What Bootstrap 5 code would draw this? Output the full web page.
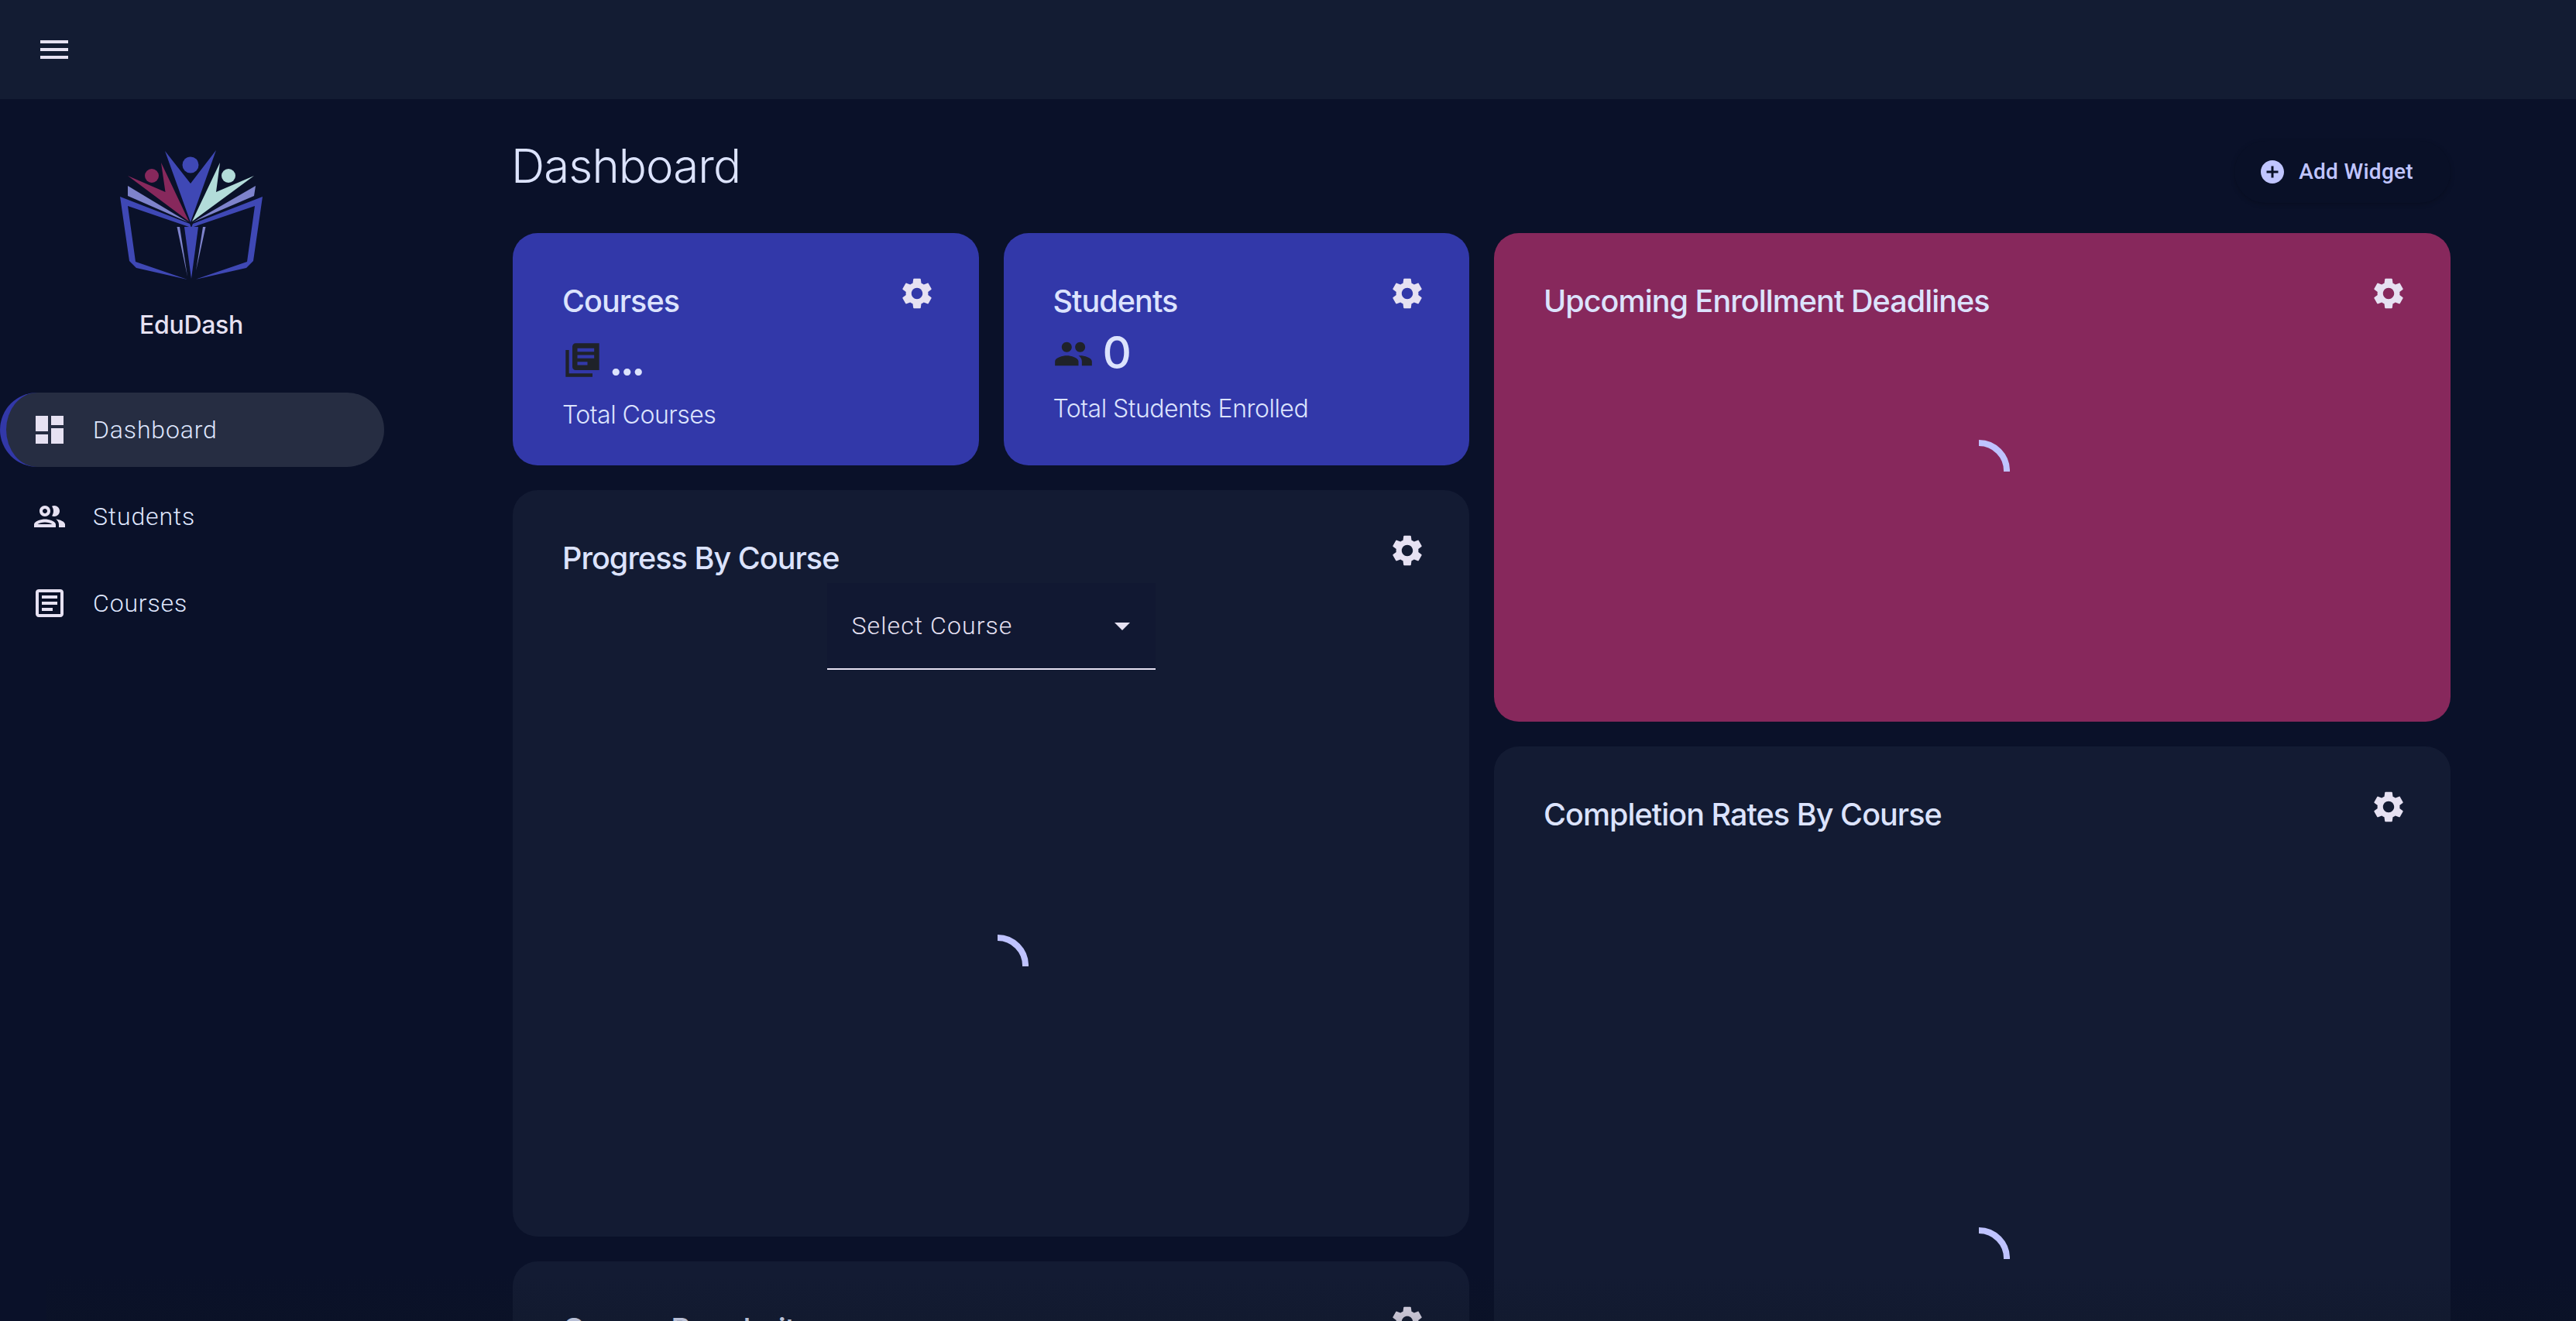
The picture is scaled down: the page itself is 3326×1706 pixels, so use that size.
<!doctype html>
<html lang="en"><head><meta charset="utf-8"><title>EduDash</title>
<link href="https://cdn.jsdelivr.net/npm/bootstrap@5.3.0/dist/css/bootstrap.min.css" rel="stylesheet">
<style>
html,body{height:1706px;overflow:hidden}
body{background:#0a1129;color:#dce3fd;font-family:Inter,"Liberation Sans",sans-serif}
body::after{content:"";position:absolute;left:60px;right:0;top:1646px;height:60px;background:linear-gradient(to bottom,rgba(14,22,30,0),rgba(14,22,30,.18));pointer-events:none}
.ed-top{height:128px;background:#131c33;padding:0 0 0 46px;align-items:center;justify-content:flex-start}
.ed-top svg{width:48px;height:48px;fill:#e6e1f2;display:block}
.ed-side{width:500px;flex:none;padding-top:66px}
.ed-logo{display:block;margin:0 auto 0 155px;width:184px;height:167px}
.ed-brand{font:500 32px/48px Inter,sans-serif;letter-spacing:-.3px;color:#e6e1f2;text-align:center;width:494px;margin-top:35px}
.ed-nav{margin-top:63px;width:496px;gap:16px}
.ed-link{height:96px;border-radius:48px;padding:0 0 0 40px;gap:32px;font:300 32px/48px Roboto,sans-serif;letter-spacing:.85px;color:#dfe6fd;align-items:center;border-left:8px solid transparent}
.ed-link:hover{color:#dfe6fd}
.ed-link svg{width:48px;height:48px;fill:#e6e1f2;flex:none}
.ed-link.active{background:#262d42;border-left-color:#3238a8;padding-left:32px;color:#dfe6fd}
.ed-link:not(.active){border-left:0}
.ed-main{width:2502px;flex:none;margin-left:162px}
.ed-head{height:173px}
.ed-h1{font:350 60px/72px Inter,sans-serif;letter-spacing:-.9px;color:#dce3fd;margin:50px 0 0 -2px}
.ed-add{height:80px;margin-top:54px;border-radius:40px;background:#091027;border:0;box-shadow:0 2px 6px rgba(0,0,0,.2);color:#c0c5ff;font:500 28px/1 Roboto,sans-serif;letter-spacing:.3px;padding:0 48px 0 31px;gap:16px;display:flex;align-items:center}
.ed-add:hover,.ed-add:active{background:#091027!important;color:#c0c5ff!important}
.ed-add svg{width:36px;height:36px;fill:#c0c5ff}
.ed-col{width:1235px;flex:none;gap:32px}
.ed-stat-row{gap:32px}
.ed-card{border:0;border-radius:32px;background:#131b33;color:#dce3fd;padding:56px 56px 0 64px;flex:none;overflow:hidden}
.ed-blue{background:#3238a9;height:300px;flex:1 1 0}
.ed-pink{background:#87285c;height:631px}
.ed-tall{height:964px}
.ed-comp{height:1100px}
.ed-pop{height:600px}
.ed-ttl{font:500 39.5px/64px Inter,sans-serif;letter-spacing:-.95px;color:#dce3fd;margin:0}
.ed-gear{width:48px;height:48px;fill:#e6e1f2;margin-top:-2px;flex:none}
.ed-stat{gap:12px;align-items:flex-start;font:500 58px/58px Inter,sans-serif;color:#dce3fd}
.ed-ico{width:52px;height:52px;fill:#1f2229;flex:none}
.ed-r1{height:91px;gap:8px}.ed-r1 .ed-ico{margin-top:18px}.ed-r1 span{margin-top:13px;font-weight:600;letter-spacing:-4px}
.ed-r2{height:83px}.ed-r2 .ed-ico{margin-top:10px}.ed-r2 span{margin-top:5px}
.ed-sub{font:300 32px/48px Inter,sans-serif;letter-spacing:-.5px;color:#dce3fd;margin:0}
.ed-select{width:424px;height:112px;background:#111832;border-bottom:2px solid #e6e1f2;padding:0 32px;margin-left:calc(50% - 216px);font:300 32px/48px Roboto,sans-serif;letter-spacing:1.1px;color:#e6e1f2;align-items:center;justify-content:space-between}
.ed-select svg{width:48px;height:48px;fill:#e6e1f2;margin-right:-13px}
.ed-spin{display:block;width:80px;height:80px;margin-left:calc(50% - 50px);transform:translateX(14px)}
.ed-spin path{fill:none;stroke:#bfc3ff;stroke-width:8}
.ed-s1{margin-top:147px}.ed-s2{margin-top:342px}.ed-s3{margin-top:501px}
</style></head>
<body>
<svg width="0" height="0" class="position-absolute"><defs>
<symbol id="gear" viewBox="0 0 24 24"><path d="M19.14 12.94c.04-.3.06-.61.06-.94 0-.32-.02-.64-.07-.94l2.03-1.58c.18-.14.23-.41.12-.61l-1.92-3.32c-.12-.22-.37-.29-.59-.22l-2.39.96c-.5-.38-1.03-.7-1.62-.94l-.36-2.54c-.04-.24-.24-.41-.48-.41h-3.84c-.24 0-.43.17-.47.41l-.36 2.54c-.59.24-1.13.57-1.62.94l-2.39-.96c-.22-.08-.47 0-.59.22L2.74 8.87c-.12.21-.08.47.12.61l2.03 1.58c-.05.3-.09.63-.09.94s.02.64.07.94l-2.03 1.58c-.18.14-.23.41-.12.61l1.92 3.32c.12.22.37.29.59.22l2.39-.96c.5.38 1.03.7 1.62.94l.36 2.54c.05.24.24.41.48.41h3.84c.24 0 .44-.17.47-.41l.36-2.54c.59-.24 1.13-.56 1.62-.94l2.39.96c.22.08.47 0 .59-.22l1.92-3.32c.12-.22.07-.47-.12-.61l-2.01-1.58zM12 15.6c-1.98 0-3.6-1.62-3.6-3.6s1.62-3.6 3.6-3.6 3.6 1.62 3.6 3.6-1.62 3.6-3.6 3.6z"/></symbol>
</defs></svg>
<nav class="navbar ed-top"><svg viewBox="0 0 24 24"><path d="M3 18h18v-2H3v2zm0-5h18v-2H3v2zm0-7v2h18V6H3z"/></svg></nav>
<div class="d-flex">
<aside class="ed-side">
<svg class="ed-logo" viewBox="155 194 184 167">
<g fill="#3f48b5"><polygon points="213,195 246,237 279,194 246,287"/><ellipse cx="246" cy="213" rx="10.5" ry="10.6"/>
<polygon points="155,254 245,289 247,294 165,266 175,338 242,361 176,346 167,337"/><polygon points="339,254 249,289 247,294 329,266 319,338 252,361 318,346 327,337"/>
<polygon points="238,293 256,293 247,360"/></g>
<g fill="#87285c"><polygon points="165,227 213.5,248 208,210 244,286"/><circle cx="196" cy="227" r="9"/></g>
<g fill="#b2dcd9"><polygon points="328,227 279,248 284,210 248,286"/><circle cx="295" cy="227" r="9"/></g>
<g fill="#7e83cc"><polygon points="165,240 243,287 165,253"/><polygon points="330,240 249,287 328,253"/><polygon points="228.5,293 232,293 242,357"/><polygon points="265.5,293 262,293 253,350"/></g>
</svg>
<div class="ed-brand">EduDash</div>
<nav class="nav flex-column ed-nav">
<a class="nav-link d-flex ed-link active" href="#"><svg viewBox="0 0 24 24"><path d="M3 13h8V3H3v10zm0 8h8v-6H3v6zm10 0h8V11h-8v10zm0-18v6h8V3h-8z"/></svg>Dashboard</a>
<a class="nav-link d-flex ed-link" href="#"><svg viewBox="0 0 24 24"><path d="M9 13.75c-2.34 0-7 1.17-7 3.5V19h14v-1.75c0-2.33-4.66-3.5-7-3.5zM4.34 17c.84-.58 2.87-1.25 4.66-1.25s3.82.67 4.66 1.25H4.34zM9 12c1.93 0 3.5-1.57 3.5-3.5S10.93 5 9 5 5.5 6.57 5.5 8.5 7.07 12 9 12zm0-5c.83 0 1.5.67 1.5 1.5S9.83 10 9 10s-1.5-.67-1.5-1.5S8.17 7 9 7zm7.04 6.81c1.16.84 1.96 1.96 1.96 3.44V19h4v-1.75c0-2.02-3.5-3.17-5.96-3.44zM15 12c1.93 0 3.5-1.57 3.5-3.5S16.93 5 15 5c-.54 0-1.04.13-1.5.35.63.89 1 1.98 1 3.15s-.37 2.26-1 3.15c.46.22.96.35 1.5.35z"/></svg>Students</a>
<a class="nav-link d-flex ed-link" href="#"><svg viewBox="0 0 24 24"><path d="M19 5v14H5V5h14m0-2H5c-1.1 0-2 .9-2 2v14c0 1.1.9 2 2 2h14c1.1 0 2-.9 2-2V5c0-1.1-.9-2-2-2z"/><path d="M14 17H7v-2h7v2zm3-4H7v-2h10v2zm0-4H7V7h10v2z"/></svg>Courses</a>
</nav>
</aside>
<main class="ed-main">
<div class="d-flex justify-content-between align-items-start ed-head">
<h1 class="ed-h1">Dashboard</h1>
<button class="btn ed-add" type="button"><svg viewBox="0 0 24 24"><path d="M12 2C6.48 2 2 6.48 2 12s4.48 10 10 10 10-4.48 10-10S17.52 2 12 2zm5 11h-4v4h-2v-4H7v-2h4V7h2v4h4v2z"/></svg>Add Widget</button>
</div>
<div class="d-flex gap-0 justify-content-between">
<div class="d-flex flex-column ed-col">
<div class="d-flex ed-stat-row">
<section class="card ed-card ed-blue">
<div class="d-flex justify-content-between align-items-start"><h2 class="ed-ttl">Courses</h2><svg class="ed-gear"><use href="#gear"/></svg></div>
<div class="d-flex ed-stat ed-r1"><svg class="ed-ico" viewBox="0 0 24 24"><path fill-rule="evenodd" d="M4 6H2v16h16v-2H4V6zM22 2H8c-1.1 0-2 .9-2 2v12c0 1.1.9 2 2 2h14V2zm-3 9H9V9h10v2zm-4 4H9v-2h6v2zm4-8H9V5h10v2z"/></svg><span>...</span></div>
<p class="ed-sub">Total Courses</p>
</section>
<section class="card ed-card ed-blue">
<div class="d-flex justify-content-between align-items-start"><h2 class="ed-ttl">Students</h2><svg class="ed-gear"><use href="#gear"/></svg></div>
<div class="d-flex ed-stat ed-r2"><svg class="ed-ico" viewBox="0 0 24 24"><path d="M16 11c1.66 0 2.99-1.34 2.99-3S17.66 5 16 5c-1.66 0-3 1.34-3 3s1.34 3 3 3zm-8 0c1.66 0 2.99-1.34 2.99-3S9.66 5 8 5C6.34 5 5 6.34 5 8s1.34 3 3 3zm0 2c-2.33 0-7 1.17-7 3.5V19h14v-2.5c0-2.33-4.67-3.5-7-3.5zm8 0c-.29 0-.62.02-.97.05 1.16.84 1.97 1.97 1.97 3.45V19h6v-2.5c0-2.33-4.67-3.5-7-3.5z"/></svg><span>0</span></div>
<p class="ed-sub">Total Students Enrolled</p>
</section>
</div>
<section class="card ed-card ed-tall">
<div class="d-flex justify-content-between align-items-start"><h2 class="ed-ttl">Progress By Course</h2><svg class="ed-gear"><use href="#gear"/></svg></div>
<div class="d-flex ed-select"><span>Select Course</span><svg viewBox="0 0 24 24"><path d="M7 10l5 5 5-5z"/></svg></div>
<svg class="ed-spin ed-s2" viewBox="0 0 80 80"><path d="M40 4A36 36 0 0 1 76 41"/></svg>
</section>
<section class="card ed-card ed-pop">
<div class="d-flex justify-content-between align-items-start"><h2 class="ed-ttl">Course Popularity</h2><svg class="ed-gear"><use href="#gear"/></svg></div>
</section>
</div>
<div class="d-flex flex-column ed-col">
<section class="card ed-card ed-pink">
<div class="d-flex justify-content-between align-items-start"><h2 class="ed-ttl">Upcoming Enrollment Deadlines</h2><svg class="ed-gear"><use href="#gear"/></svg></div>
<svg class="ed-spin ed-s1" viewBox="0 0 80 80"><path d="M40 4A36 36 0 0 1 76 41"/></svg>
</section>
<section class="card ed-card ed-comp">
<div class="d-flex justify-content-between align-items-start"><h2 class="ed-ttl">Completion Rates By Course</h2><svg class="ed-gear"><use href="#gear"/></svg></div>
<svg class="ed-spin ed-s3" viewBox="0 0 80 80"><path d="M40 4A36 36 0 0 1 76 41"/></svg>
</section>
</div>
</div>
</main>
</div>
<script src="https://cdn.jsdelivr.net/npm/bootstrap@5.3.0/dist/js/bootstrap.bundle.min.js"></script>
</body></html>
